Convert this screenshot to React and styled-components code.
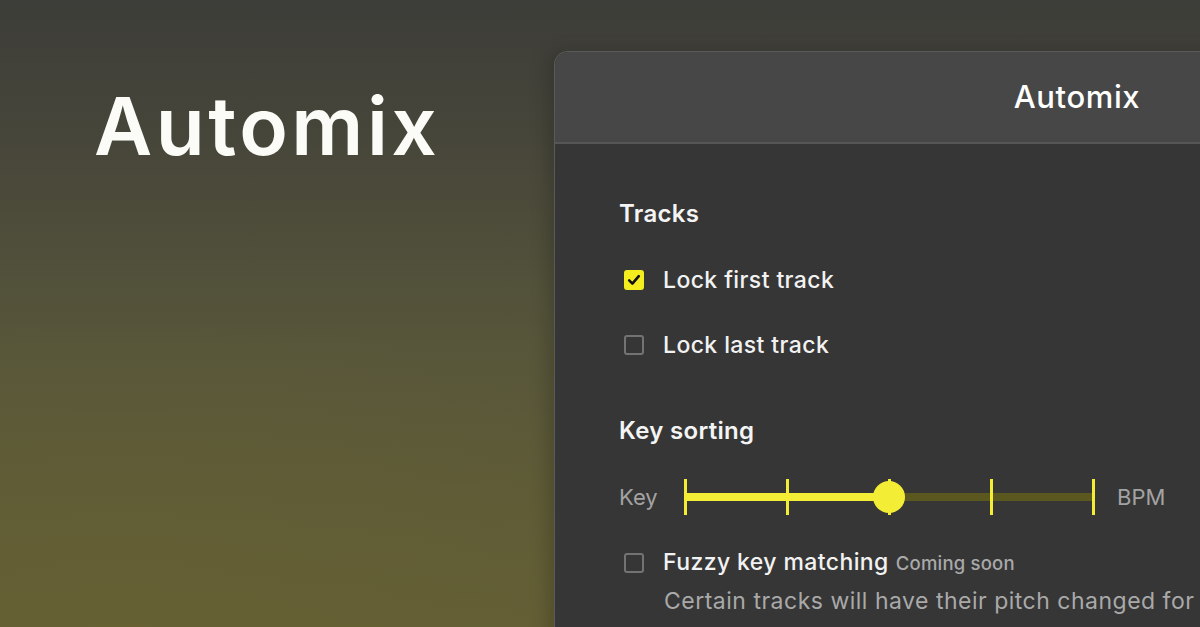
import React, { useState } from 'react';
import styled, { createGlobalStyle } from 'styled-components';

const GlobalStyle = createGlobalStyle`
  html, body {
    margin: 0;
    padding: 0;
  }
  body {
    font-family: "Inter", "Lato", "Liberation Sans", sans-serif;
    -webkit-font-smoothing: antialiased;
  }
`;

const Page = styled.div`
  width: 1200px;
  height: 627px;
  overflow: hidden;
  display: flex;
  align-items: flex-start;
  padding-top: 51px;
  box-sizing: border-box;
  background:
    radial-gradient(ellipse 90% 70% at 10% 100%, rgba(104, 98, 48, 0.55), rgba(104, 98, 48, 0) 70%),
    linear-gradient(180deg, #3d3d39 0%, #48473a 25%, #57563a 55%, #625e36 100%);
`;

const Intro = styled.div`
  width: 554px;
  flex-shrink: 0;
  padding: 35px 0 0 94px;
  box-sizing: border-box;
`;

const Headline = styled.h1`
  margin: 0;
  color: #fbfbf7;
  font-size: 80px;
  font-weight: 600;
  letter-spacing: 3.5px;
  line-height: 1;
`;

const Window = styled.div`
  width: 1044px;
  flex-shrink: 0;
  height: 620px;
  border-radius: 14px 14px 0 0;
  background: #363636;
  border: 1px solid #5a5a5a;
  border-bottom: none;
  box-shadow: -6px 0 18px rgba(0, 0, 0, 0.18);
  overflow: hidden;
`;

const TitleBar = styled.div`
  height: 92px;
  display: flex;
  align-items: center;
  justify-content: center;
  background: #474747;
  border-bottom: 2px solid #565656;
  color: #ffffff;
  font-size: 31px;
  font-weight: 500;
  letter-spacing: 0.6px;
  padding-bottom: 2px;
  box-sizing: border-box;
`;

const Body = styled.div`
  padding: 56px 0 0 64px;
  display: flex;
  flex-direction: column;
`;

const SectionTitle = styled.h2`
  margin: 0 0 ${p => p.$gap}px;
  color: #f4f4f4;
  font-size: 24px;
  font-weight: 600;
  letter-spacing: 0.3px;
  line-height: 28px;
`;

const OptionRow = styled.label`
  display: flex;
  align-items: center;
  gap: 19px;
  margin-bottom: ${p => p.$gap || 0}px;
  padding-left: 5px;
  cursor: pointer;
`;

const Box = styled.span`
  width: 20px;
  height: 20px;
  box-sizing: border-box;
  border-radius: 3px;
  display: flex;
  align-items: center;
  justify-content: center;
  flex-shrink: 0;
  background: ${p => (p.$checked ? '#f5ee1f' : 'transparent')};
  border: 2px solid ${p => (p.$checked ? '#f5ee1f' : '#737373')};
`;

const OptionLabel = styled.span`
  color: #f2f2f2;
  font-size: 23px;
  font-weight: 500;
  letter-spacing: 0.4px;
  line-height: 28px;
  white-space: nowrap;
`;

const Badge = styled.span`
  color: #a9a9a9;
  font-size: 18.5px;
  font-weight: 500;
  letter-spacing: 0.2px;
  margin-left: 7px;
`;

const Description = styled.p`
  margin: 10px 0 0 45px;
  color: #a9a9a9;
  font-size: 23px;
  font-weight: 400;
  letter-spacing: 0.5px;
  line-height: 28px;
  white-space: nowrap;
`;

const SliderRow = styled.div`
  display: flex;
  align-items: center;
  margin: 0 0 31px;
  height: 40px;
`;

const SliderEnd = styled.span`
  color: #a3a3a3;
  font-size: 22px;
  font-weight: 400;
  width: ${p => p.$w}px;
`;

const Track = styled.div`
  position: relative;
  width: 408px;
  height: 40px;
  margin: 0 24px 0 0;
`;

const Rail = styled.div`
  position: absolute;
  left: 0;
  top: 16px;
  height: 8px;
  width: 100%;
  background: #5a571f;
`;

const Fill = styled.div`
  position: absolute;
  left: 0;
  top: 16px;
  height: 8px;
  background: #f3ed35;
`;

const Tick = styled.div`
  position: absolute;
  top: 2px;
  width: 3px;
  height: 36px;
  margin-left: -1px;
  background: #f3ed35;
`;

const Thumb = styled.div`
  position: absolute;
  top: 4px;
  width: 32px;
  height: 32px;
  margin-left: -16px;
  border-radius: 50%;
  background: #f3ed35;
`;

const Check = () => (
  <svg width="14" height="14" viewBox="0 0 14 14">
    <path d="M2.2 7.4 L5.4 10.6 L11.8 3.2" fill="none" stroke="#111" strokeWidth="2.6" strokeLinecap="round" strokeLinejoin="round" />
  </svg>
);

const Option = ({ checked, onToggle, gap, children }) => (
  <OptionRow $gap={gap} onClick={onToggle}>
    <Box $checked={checked}>{checked && <Check />}</Box>
    <OptionLabel>{children}</OptionLabel>
  </OptionRow>
);

const KeySlider = ({ value, steps }) => {
  const pct = (value / (steps - 1)) * 100;
  return (
    <SliderRow>
      <SliderEnd $w={66}>Key</SliderEnd>
      <Track>
        <Rail />
        <Fill style={{ width: `${pct}%` }} />
        {Array.from({ length: steps }).map((_, i) => (
          <Tick key={i} style={{ left: `${(i / (steps - 1)) * 100}%` }} />
        ))}
        <Thumb style={{ left: `${pct}%` }} />
      </Track>
      <SliderEnd $w={60}>BPM</SliderEnd>
    </SliderRow>
  );
};

const App = () => {
  const [lockFirst, setLockFirst] = useState(true);
  const [lockLast, setLockLast] = useState(false);

  return (
    <Page>
      <GlobalStyle />
      <Intro>
        <Headline>Automix</Headline>
      </Intro>
      <Window>
        <TitleBar>Automix</TitleBar>
        <Body>
          <SectionTitle $gap={38}>Tracks</SectionTitle>
          <Option checked={lockFirst} onToggle={() => setLockFirst(!lockFirst)} gap={37}>
            Lock first track
          </Option>
          <Option checked={lockLast} onToggle={() => setLockLast(!lockLast)} gap={58}>
            Lock last track
          </Option>
          <SectionTitle $gap={32}>Key sorting</SectionTitle>
          <KeySlider value={2} steps={5} />
          <OptionRow>
            <Box />
            <OptionLabel>
              Fuzzy key matching<Badge>Coming soon</Badge>
            </OptionLabel>
          </OptionRow>
          <Description>Certain tracks will have their pitch changed for improved harmonic mixing</Description>
        </Body>
      </Window>
    </Page>
  );
};

export default App;
